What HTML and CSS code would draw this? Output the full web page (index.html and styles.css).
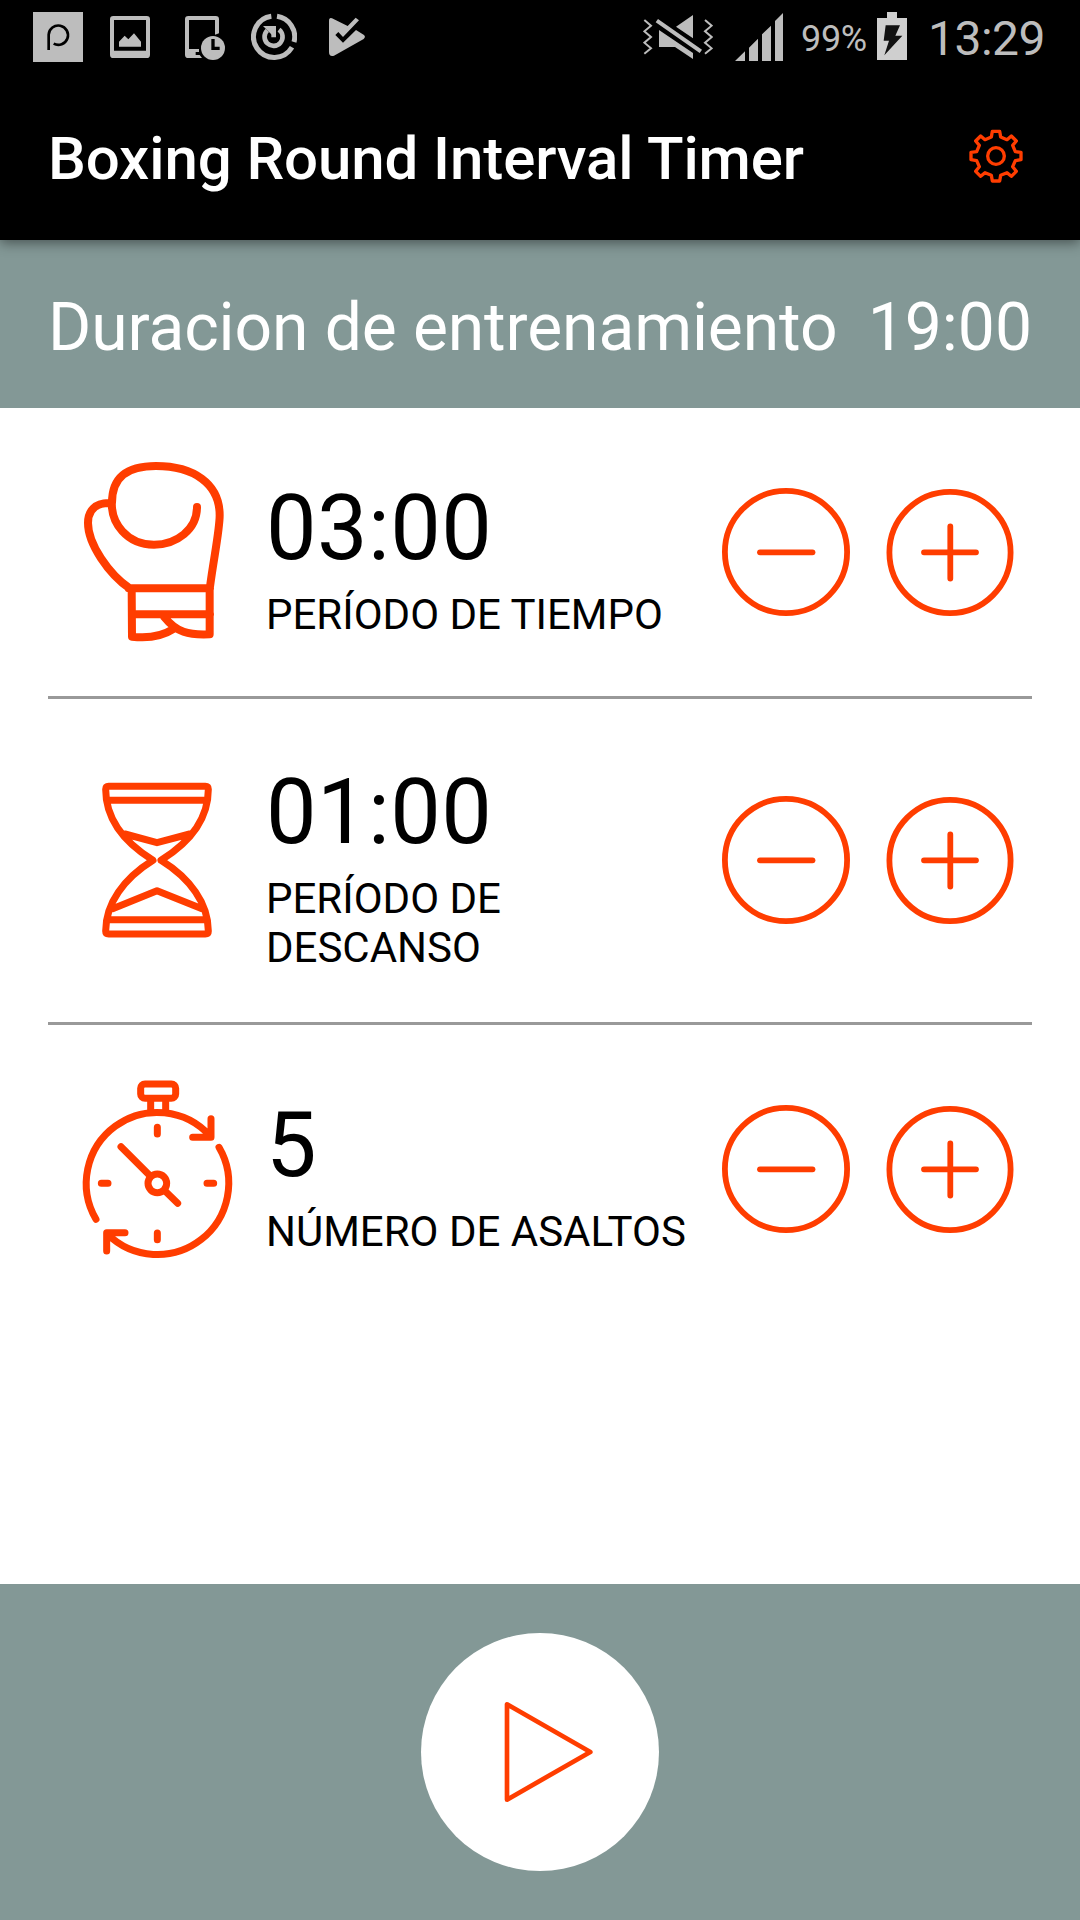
FILE: index.html
```html
<!DOCTYPE html>
<html lang="es">
<head>
    <meta charset="UTF-8">
    <meta name="viewport" content="width=device-width, initial-scale=1.0">
    <title>Boxing Round Interval Timer</title>
    <link rel="stylesheet" href="styles.css">
</head>
<body>
    <!-- Shared icons -->
    <svg class="symbols">
        <symbol id="minus" viewBox="0 0 128 128">
            <circle cx="64" cy="64" r="61.1"/>
            <path d="M38 64.3H90.5"/>
        </symbol>
        <symbol id="plus" viewBox="0 0 128 128">
            <circle cx="64" cy="64.5" r="60.6"/>
            <path d="M38 64.3H90M64.3 38.5V90.5"/>
        </symbol>
    </svg>

    <div class="status-bar">
        <svg class="status-p" width="50" height="50" viewBox="99 36 150 150">
            <path fill="#bdbdbd" d="M99 36h150v150H99z"/>
            <path fill="none" stroke="#000" stroke-width="8" d="M146 150V104A29 29 0 1 1 161 131"/>
        </svg>
        <svg class="status-image" width="40" height="50" viewBox="330 36 120 150">
            <path fill-rule="evenodd" d="M340 48h100q10 0 10 10v106q0 10-10 10H340q-10 0-10-10V58q0-10 10-10zM342 60v92h96V60z"/>
            <path d="M357 140v-15l17-18 11 11 17-18 21 25v15z"/>
        </svg>
        <svg class="status-tablet" width="40" height="50" viewBox="555 36 120 150">
            <path d="M565 48h82q10 0 10 10v42l-12 4V60h-78v87h30v9h-10v9h12l7 9H565q-10 0-10-10V58q0-10 10-10z"/>
            <circle cx="639" cy="144" r="36"/>
            <path fill="none" stroke="#000" stroke-width="10" d="M639 117v28h20"/>
        </svg>
        <svg class="status-power" width="46" height="50" viewBox="753 36 138 150">
            <g fill="none" stroke="#bdbdbd">
                <path stroke-width="15" d="M814 49A62 62 0 1 0 876 142M831 49A62 62 0 0 1 882 126"/>
                <path stroke-width="14" d="M802 91A27 27 0 1 0 837 89M821 78v34"/>
            </g>
            <path d="M789 78h27v27z"/>
        </svg>
        <svg class="status-play" width="36" height="50" viewBox="987 36 108 150">
            <path d="M996 55l47 23 24-25 10 8-48 50-14-15-9 9 23 23 39-38 24 15q6 6-1 12l-89 50q-15 4-15-11V63q0-11 9-8z"/>
        </svg>

        <svg class="status-mute" width="70" height="50" viewBox="69 36 210 150">
            <path fill="none" stroke="#bdbdbd" stroke-width="6" d="M73 60l20 17-20 17 20 17-20 17 20 17-20 16M255 60l20 17-20 17 20 17-20 17 20 17-20 16"/>
            <path d="M219 45v70l-51-35zM117 90l102 69v18l-54-36h-48zM114 57l132 92-7 10-132-92z"/>
        </svg>
        <svg class="status-signal" width="48" height="50" viewBox="345 36 144 150">
            <path d="M345 183l30-29v29zM387 183v-40l27-27v67zM426 183v-80l27-26v106zM465 183V63l24-24v144z"/>
        </svg>
        <span class="status-percent">99%</span>
        <svg class="status-battery" width="30" height="50" viewBox="771 36 90 150">
            <path fill="#cfcfcf" d="M801 36h30v18h30v126h-90V54h30z"/>
            <path fill="#111" d="M797 76h43l-14 31h21l-54 59 14-44h-16z"/>
        </svg>
        <span class="status-clock">13:29</span>
    </div>

    <header class="toolbar">
        <h1>Boxing Round Interval Timer</h1>
        <svg class="gear" width="54" height="54" viewBox="87 58 162 162">
            <path d="M157 65h22l3 17 19 8 13-11 15 15-11 13 8 19 17 2v22l-17 3-8 18 11 14-15 15-13-11-19 8-3 17h-22l-3-17-19-8-13 11-15-15 11-14-8-18-17-3v-22l17-2 8-19-11-13 15-15 13 11 19-8z"/>
            <circle cx="168" cy="139" r="25"/>
        </svg>
    </header>

    <div class="total">
        <span class="total-label">Duracion de entrenamiento</span>
        <span>19:00</span>
    </div>

    <main class="settings">
        <div class="row">
            <svg class="icon" width="200" height="220" viewBox="0 6 600 660">
                <path stroke-width="24" d="M156 188C156 110 202 78 288 78C400 78 479 130 479 226C479 270 462 350 450 440M156 180C150 250 202 314 282 314C350 314 411 268 411 201M146 189C105 189 84 213 84 249C84 312 146 402 210 446M206 445H450M215 445L216 590C265 596 305 590 342 566M216 523H450M449 445V583C385 586 350 577 312 530"/>
            </svg>
            <div class="info">
                <div class="value">03:00</div>
                <div class="label">PERÍODO DE TIEMPO</div>
            </div>
            <svg class="button"><use href="#minus"/></svg>
            <svg class="button"><use href="#plus"/></svg>
        </div>

        <div class="row row-tall">
            <svg class="icon" width="200" height="220" viewBox="0 -30 600 660">
                <path stroke-width="21" d="M146 79H436Q445 79 445 88C445 175 390 247 303 301C390 355 445 430 445 513Q445 522 436 522H146Q137 522 137 513C137 430 192 355 279 301C192 247 137 175 137 88Q137 79 146 79ZM140 121H442M142 479H440M195 222L291 248L389 222M158 446L291 392L426 446"/>
            </svg>
            <div class="info">
                <div class="value">01:00</div>
                <div class="label">PERÍODO DE DESCANSO</div>
            </div>
            <svg class="button"><use href="#minus"/></svg>
            <svg class="button"><use href="#plus"/></svg>
        </div>

        <div class="row">
            <svg class="icon" width="200" height="220" viewBox="0 -3 600 660">
                <g stroke-width="21">
                    <rect x="242" y="72" width="105" height="43" rx="13"/>
                    <path d="M272 120v34M317 120v34"/>
                    <path d="M108 478A212.9 212.9 0 0 1 450 228M453 176V232H398M477 262A213.9 213.9 0 0 1 142 522M195 518H140V573"/>
                    <path d="M292 202v20M292 519v20M124 370h20M441 370h20M183 260L270 347M316 394L353 430"/>
                    <circle cx="292" cy="370" r="28"/>
                </g>
            </svg>
            <div class="info">
                <div class="value">5</div>
                <div class="label">NÚMERO DE ASALTOS</div>
            </div>
            <svg class="button"><use href="#minus"/></svg>
            <svg class="button"><use href="#plus"/></svg>
        </div>
    </main>

    <footer class="footer">
        <div class="play">
            <svg width="238" height="238" viewBox="63 188 714 714">
                <path d="M321 402V688L571 545Z"/>
            </svg>
        </div>
    </footer>
</body>
</html>
```
FILE: styles.css
```css
* {
    box-sizing: border-box;
}
body {
    margin: 0;
    width: 1080px;
    height: 1920px;
    display: flex;
    flex-direction: column;
    font-family: Roboto, sans-serif;
    background-color: #ffffff;
    color: #000;
    overflow: hidden;
}
svg {
    display: block;
    flex: none;
}
.symbols {
    display: none;
}

/* Status bar */
.status-bar {
    height: 75px;
    flex: none;
    display: flex;
    align-items: flex-start;
    padding: 12px 0 0 33px;
    background-color: #000;
    color: #bdbdbd;
    fill: #bdbdbd;
    white-space: nowrap;
}
.status-image {
    margin-left: 27px;
}
.status-tablet {
    margin-left: 35px;
}
.status-power {
    margin-left: 26px;
}
.status-play {
    margin-left: 32px;
}
.status-mute {
    margin-left: 278px;
}
.status-signal {
    margin-left: 22px;
}
.status-percent {
    width: 76px;
    margin-left: 18px;
    font-size: 36px;
    line-height: 54px;
    letter-spacing: -0.3px;
}
.status-clock {
    margin-left: 21px;
    font-size: 48px;
    line-height: 54px;
    letter-spacing: -0.5px;
}

/* Toolbar */
.toolbar {
    height: 165px;
    flex: none;
    display: flex;
    justify-content: space-between;
    align-items: flex-start;
    padding: 48px 57px 0 48px;
    background-color: #000;
    color: #fff;
    box-shadow: 0 3px 12px rgba(0, 0, 0, 0.45);
    z-index: 1;
}
.toolbar h1 {
    margin: 0;
    font-size: 60px;
    font-weight: 500;
    line-height: 72px;
    letter-spacing: -0.1px;
}
.gear {
    margin-top: 6px;
    fill: none;
    stroke: #ff3d00;
    stroke-width: 10;
    stroke-linejoin: round;
}

.total {
    height: 168px;
    flex: none;
    display: flex;
    justify-content: space-between;
    padding: 49px 48px 0;
    background-color: #839896;
    color: #fff;
    font-size: 66px;
    line-height: 78px;
}
.total-label {
    letter-spacing: -0.12px;
}

/* Timer settings */
.settings {
    flex: 1;
    padding: 0 48px;
}
.row {
    height: 291px;
    display: flex;
    align-items: center;
    padding: 0 18px 0 12px;
    border-bottom: 3px solid #999;
}
.row-tall {
    height: 326px;
    padding-bottom: 1px;
}
.row:last-child {
    height: 288px;
    border-bottom: none;
}
.icon {
    fill: none;
    stroke: #ff3d00;
    stroke-linecap: round;
    stroke-linejoin: round;
}
.info {
    flex: 1;
    padding: 11px 0 0 6px;
}
.row-tall .info {
    padding-top: 12px;
}
.value {
    font-size: 90px;
    line-height: 106px;
    letter-spacing: 0.4px;
    margin-bottom: 8px;
}
.label {
    font-size: 42px;
    line-height: 49px;
}
.button {
    width: 128px;
    height: 128px;
    fill: none;
    stroke: #ff3d00;
    stroke-width: 5.8;
    stroke-linecap: round;
}
.button + .button {
    margin-left: 36px;
}

/* Start button */
.footer {
    height: 336px;
    flex: none;
    display: flex;
    justify-content: center;
    align-items: center;
    background-color: #839896;
}
.play {
    width: 238px;
    height: 238px;
    border-radius: 50%;
    background-color: #fff;
}
.play svg {
    fill: none;
    stroke: #ff3d00;
    stroke-width: 14;
    stroke-linejoin: round;
}
```
